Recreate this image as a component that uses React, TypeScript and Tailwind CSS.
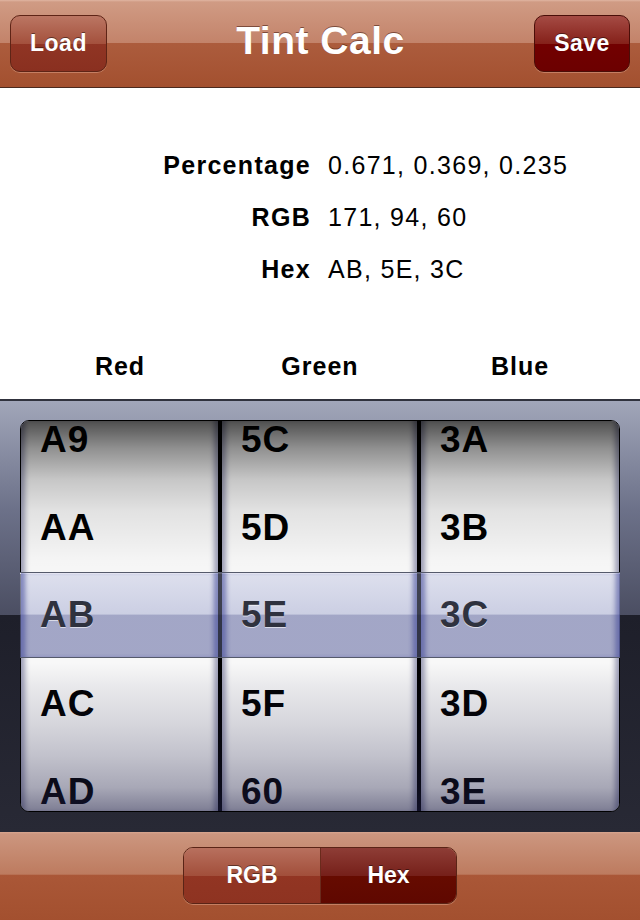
import React from 'react';

const wheels = [
  { key: 'red', values: ['A9', 'AA', 'AB', 'AC', 'AD'] },
  { key: 'green', values: ['5C', '5D', '5E', '5F', '60'] },
  { key: 'blue', values: ['3A', '3B', '3C', '3D', '3E'] },
];

const info = [
  { label: 'Percentage', value: '0.671, 0.369, 0.235' },
  { label: 'RGB', value: '171, 94, 60' },
  { label: 'Hex', value: 'AB, 5E, 3C' },
];

const Wheel: React.FC<{ values: string[] }> = ({ values }) => (
  <div className="overflow-hidden shadow-[inset_7px_0_5px_-3px_rgba(70,72,120,0.5),inset_-7px_0_5px_-3px_rgba(70,72,120,0.5)]">
    <div className="-mt-[25px]">
      {values.map((v, i) => (
        <div
          key={v}
          className={`h-[88px] flex items-center pl-[19px] text-[37px] font-bold tracking-[1px] text-black ${i === 2 ? 'invisible' : ''}`}
        >
          {v}
        </div>
      ))}
    </div>
  </div>
);

const App: React.FC = () => {
  const selected = wheels.map((w) => w.values[2]);

  return (
    <div className="w-[640px] h-[920px] flex flex-col bg-white font-['Liberation_Sans',Arial,Helvetica,sans-serif] select-none">
      {/* Nav bar */}
      <div className="h-[88px] flex items-center px-[10px] border-b border-[#4a2a1e] bg-[linear-gradient(to_bottom,#e0b5a2_0px,#d09b84_2px,#c3836a_49%,#ac5c3d_50%,#a3502f_100%)]">
        <button className="w-[97px] h-[57px] rounded-[10px] border border-[#5e2416] bg-[linear-gradient(to_bottom,#bb7663_0%,#a4513d_50%,#903524_50%,#8a3020_100%)] shadow-[0_1px_0_rgba(255,210,190,0.35)] text-white text-[23px] font-bold tracking-[0.5px] [text-shadow:0_-1px_0_rgba(0,0,0,0.45)]">
          Load
        </button>
        <div className="flex-1 text-center -mt-1 text-white text-[39px] font-bold tracking-[0.5px] [text-shadow:0_-1px_0_rgba(60,20,10,0.55)]">
          Tint Calc
        </div>
        <button className="w-[96px] h-[57px] rounded-[10px] border border-[#4a0e08] bg-[linear-gradient(to_bottom,#a54b44_0%,#85211a_50%,#720000_50%,#6c0000_100%)] shadow-[0_1px_0_rgba(255,210,190,0.35)] text-white text-[23px] font-bold tracking-[0.5px] [text-shadow:0_-1px_0_rgba(0,0,0,0.45)]">
          Save
        </button>
      </div>

      {/* Values */}
      <div className="h-[311px] flex flex-col">
        <div className="pt-[52px]">
          {info.map((row) => (
            <div key={row.label} className="h-[52px] grid grid-cols-[311px_1fr] items-center text-[25px] tracking-[1.3px] text-black">
              <span className="text-right font-bold">{row.label}</span>
              <span className="pl-[17px]">{row.value}</span>
            </div>
          ))}
        </div>
        <div className="mt-auto mb-[4px] h-[56px] px-5 grid grid-cols-3 items-center text-center text-[25px] font-bold tracking-[1px] text-black">
          <span>Red</span>
          <span>Green</span>
          <span>Blue</span>
        </div>
      </div>

      {/* Picker */}
      <div className="relative h-[433px] pt-[21px] px-5 pb-5 bg-[linear-gradient(to_bottom,#30323d_0px,#30323d_2px,#a1a6b9_2px,#6d728a_25%,#4b4e62_50%,#1e1f2a_50%,#282935_100%)]">
        <div className="relative h-[392px] rounded-[9px] border border-black overflow-hidden bg-[#f8f8f8] grid grid-cols-[197px_4px_195px_4px_1fr]">
          <Wheel values={wheels[0].values} />
          <div className="bg-black" />
          <Wheel values={wheels[1].values} />
          <div className="bg-black" />
          <Wheel values={wheels[2].values} />
          <div className="pointer-events-none absolute inset-0 bg-[linear-gradient(to_bottom,rgba(0,0,0,0.68)_0%,rgba(0,0,0,0.42)_7%,rgba(0,0,0,0.2)_15%,rgba(0,0,0,0.09)_23%,rgba(0,0,0,0.01)_36%,rgba(0,0,0,0)_45%,rgba(0,0,0,0)_62%,rgba(30,30,70,0.07)_68%,rgba(30,30,70,0.16)_78%,rgba(30,30,70,0.25)_86%,rgba(30,30,70,0.37)_94%,rgba(30,30,70,0.56)_100%)]" />
        </div>

        {/* Selection bar */}
        <div className="absolute left-5 right-5 top-[173px] h-[86px] border-y border-[#555a6b] bg-[linear-gradient(to_bottom,rgba(206,210,232,0.62)_0%,rgba(176,181,214,0.62)_49%,rgba(110,116,168,0.62)_50%,rgba(110,116,168,0.62)_100%)] shadow-[inset_0_1px_0_rgba(255,255,255,0.85)]">
          <div className="h-full pl-[1px] grid grid-cols-[197px_4px_195px_4px_1fr]">
            {selected.map((v, i) => (
              <React.Fragment key={v}>
                {i > 0 && <div className="bg-[#2c2f3e]/75" />}
                <div className="flex items-center pl-[19px] text-[37px] font-bold tracking-[1px] text-[#2f323f] [text-shadow:0_1px_0_rgba(255,255,255,0.6)] shadow-[inset_6px_0_4px_-2px_rgba(88,94,172,0.55),inset_-6px_0_4px_-2px_rgba(88,94,172,0.55)]">
                  {v}
                </div>
              </React.Fragment>
            ))}
          </div>
        </div>
      </div>

      {/* Bottom toolbar */}
      <div className="flex-1 flex items-center justify-center bg-[linear-gradient(to_bottom,#d7a791_0px,#cc967f_2px,#bd7b5f_48%,#aa5737_49%,#a3502f_100%)]">
        <div className="flex w-[274px] h-[57px] -mt-[2px] rounded-[10px] border border-[#5a2416] overflow-hidden shadow-[0_1px_0_rgba(255,210,190,0.35)]">
          <button className="w-[137px] border-r border-[#6a2a1c] bg-[linear-gradient(to_bottom,#b8705e_0%,#a24f3b_50%,#923523_50%,#8e3321_100%)] text-white text-[23px] font-bold [text-shadow:0_-1px_0_rgba(0,0,0,0.45)]">
            RGB
          </button>
          <button className="flex-1 bg-[linear-gradient(to_bottom,#8e3d36_0%,#76201a_50%,#660b00_50%,#5f0800_100%)] text-white text-[23px] font-bold [text-shadow:0_-1px_0_rgba(0,0,0,0.45)]">
            Hex
          </button>
        </div>
      </div>
    </div>
  );
};

export default App;
